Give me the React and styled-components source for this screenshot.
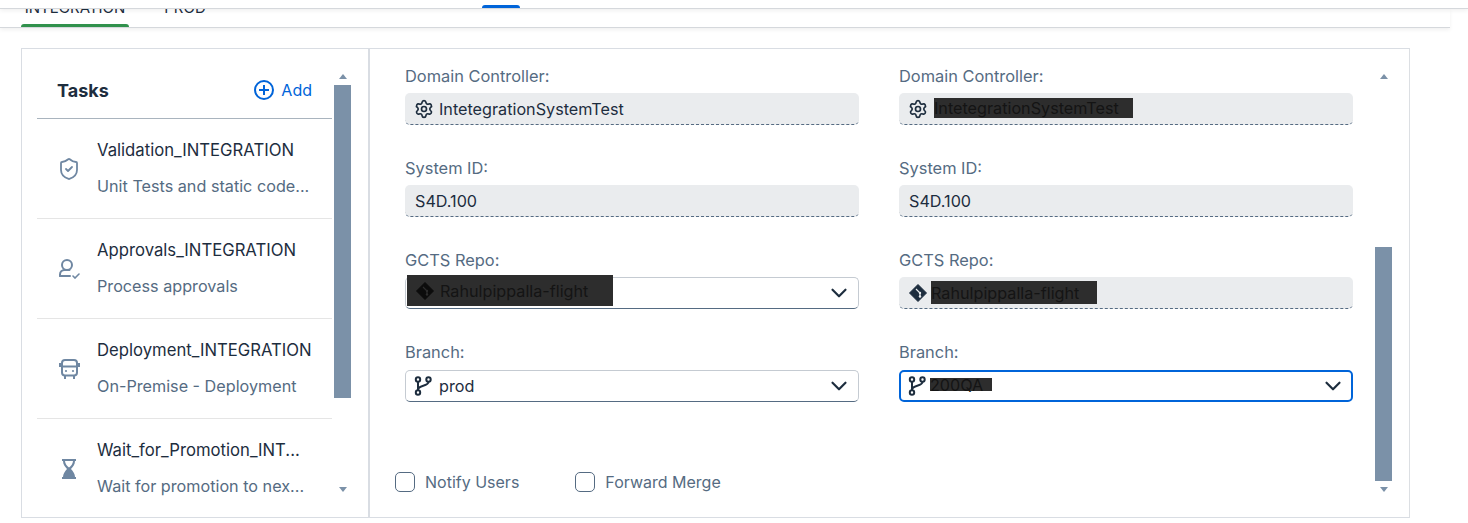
import React from "react";
import styled, { createGlobalStyle } from "styled-components";
import { ChevronDown, Settings, ShieldCheck } from "lucide-react";

const Global = createGlobalStyle`
  html, body { margin: 0; padding: 0; background: #fff; }
  body { font-family: Inter, "Noto Sans", sans-serif; color: #1d2d3e; }
  * { box-sizing: border-box; }
`;

const Page = styled.div`
  width: 1468px;
  height: 523px;
  overflow: hidden;
  background: #fff;
`;

const TopStrip = styled.div`
  position: relative;
  z-index: 1;
  height: 9px;
  background: #fff;
  border-bottom: 1px solid #d5d8dc;
  box-shadow: 0 2px 4px rgba(0, 0, 0, 0.06);
  padding-left: 482px;
  display: flex;
  align-items: flex-end;
`;

const ActiveMark = styled.div`
  width: 38px;
  height: 3px;
  background: #0064d9;
  border-radius: 3px 3px 0 0;
`;

const TabStrip = styled.div`
  width: 1450px;
  height: 19px;
  border-bottom: 1px solid #d5d8dc;
  box-shadow: 0 2px 4px rgba(0, 0, 0, 0.06);
  display: flex;
  padding-left: 21px;
  gap: 31px;
`;

const Tab = styled.div`
  width: ${(p) => p.$w}px;
  height: 18px;
  display: flex;
  flex-direction: column;
  justify-content: flex-end;
  align-items: center;
  position: relative;
  font-size: 15px;
  line-height: 20px;
  &::after {
    content: "";
    display: ${(p) => (p.$color ? "block" : "none")};
    position: absolute;
    left: 0;
    right: 0;
    bottom: 0;
    height: 3px;
    border-radius: 3px 3px 0 0;
    background: ${(p) => p.$color};
  }
`;

const TabLabel = styled.span`
  display: block;
  flex: none;
  margin-bottom: 9px;
  white-space: nowrap;
`;

const Panel = styled.div`
  width: 1389px;
  height: 470px;
  margin: 20px 0 0 21px;
  border: 1px solid #d9dde3;
  border-right-color: #dcdfe3;
  display: flex;
  overflow: hidden;
`;

const Sidebar = styled.aside`
  width: 348px;
  flex: none;
  border-right: 2px solid #d9dde3;
  display: flex;
  padding-left: 15px;
`;

const SideList = styled.div`
  width: 295px;
  flex: none;
  overflow: hidden;
`;

const SideHead = styled.div`
  height: 70px;
  border-bottom: 1px solid #a9b4be;
  display: flex;
  align-items: center;
  justify-content: space-between;
  padding: 13px 20px 0 20px;
`;

const SideTitle = styled.h2`
  margin: 0;
  font-size: 18px;
  font-weight: 700;
  color: #1d2d3e;
`;

const AddLink = styled.a`
  display: flex;
  align-items: center;
  gap: 7px;
  color: #0064d9;
  font-size: 16px;
`;

const Task = styled.div`
  height: 100px;
  flex: none;
  border-bottom: 1px solid #e5e5e5;
  display: grid;
  grid-template-columns: 60px 1fr;
  align-items: center;
`;

const TaskIcon = styled.div`
  display: flex;
  justify-content: center;
  padding-left: 4px;
  color: #6f87a2;
`;

const TaskText = styled.div`
  min-width: 0;
  display: flex;
  flex-direction: column;
  gap: 12px;
  margin-top: -2px;
`;

const TaskTitle = styled.div`
  font-size: 16.7px;
  line-height: 24px;
  white-space: nowrap;
`;

const TaskSub = styled.div`
  font-size: 16.2px;
  line-height: 24px;
  white-space: nowrap;
  color: #556b82;
`;

const Track = styled.div`
  width: 17px;
  flex: none;
  margin-left: ${(p) => p.$ml}px;
  display: flex;
  flex-direction: column;
  align-items: center;
  padding-top: 25px;
  height: 468px;
`;

const Arrow = styled.div`
  width: 0;
  height: 0;
  border-left: 4.5px solid transparent;
  border-right: 4.5px solid transparent;
  ${(p) => (p.$down ? "border-top: 5px solid #7b91a8;" : "border-bottom: 5px solid #7b91a8;")}
`;

const Thumb = styled.div`
  width: 17px;
  flex: none;
  background: #7b91a8;
  margin-top: ${(p) => p.$top}px;
  height: ${(p) => p.$h}px;
`;

const BottomArrow = styled(Arrow)`
  margin-top: ${(p) => p.$gap}px;
`;

const Main = styled.main`
  flex: 1;
  display: flex;
  min-width: 0;
`;

const Form = styled.div`
  width: 1005px;
  flex: none;
  padding: 15px 0 0 25px;
`;

const Columns = styled.div`
  display: grid;
  grid-template-columns: 454px 454px;
  column-gap: 40px;
  padding-left: 10px;
`;

const Group = styled.div`
  height: 92px;
`;

const Label = styled.div`
  font-size: 16.4px;
  line-height: 24px;
  color: #556b82;
  margin-bottom: ${(p) => p.$mb ?? 5}px;
`;

const Field = styled.div`
  height: 32px;
  border-radius: 5px;
  padding: 0 10px;
  display: flex;
  align-items: center;
  gap: 6px;
  font-size: 16.2px;
  color: #1d2d3e;
`;

const ReadField = styled(Field)`
  background: #eaecee;
  border-bottom: 1px dashed #556b82;
`;

const SelectField = styled(Field)`
  background: #fff;
  border: 1px solid #c5cbd2;
  border-bottom-color: #556b82;
`;

const FocusField = styled(Field)`
  background: #fff;
  border: 2px solid #0064d9;
  padding: 0 9px;
`;

const Caret = styled(ChevronDown)`
  margin-left: auto;
  margin-right: -4px;
  color: #1d2d3e;
`;

const Redact = styled.span`
  background: #2d2d2d;
  color: #141414;
  display: inline-flex;
  align-items: center;
  gap: 6px;
  height: ${(p) => p.$h}px;
  width: ${(p) => p.$w}px;
  margin-left: ${(p) => p.$ml || 0}px;
  margin-top: ${(p) => p.$mt || 0}px;
  padding-left: ${(p) => p.$pl || 0}px;
  flex: none;
  white-space: nowrap;
`;

const Checks = styled.div`
  display: flex;
  gap: 56px;
  margin-top: 40px;
`;

const Check = styled.label`
  display: flex;
  align-items: center;
  gap: 10px;
  font-size: 16px;
  color: #556b82;
`;

const Box = styled.span`
  width: 20px;
  height: 20px;
  border: 1px solid #556b82;
  border-radius: 5px;
  background: #fff;
`;

const Plus = () => (
  <svg width="20" height="20" viewBox="0 0 20 20" fill="none" stroke="#0064d9" strokeWidth="2">
    <circle cx="10" cy="10" r="9" />
    <path d="M10 5v10M5 10h10" />
  </svg>
);

const UserTick = () => (
  <svg width="22" height="20" viewBox="0 0 22 20" fill="none" stroke="#6f87a2" strokeWidth="2" strokeLinecap="round">
    <circle cx="9" cy="6" r="5" />
    <path d="M2 17v-1.500c0-2.500 2-4.500 4.500-4.500h5" />
    <path d="M2 17h10" />
    <path d="M15 17l2 2 4-4" strokeWidth="1.600" />
  </svg>
);

const Bus = () => (
  <svg width="21" height="20" viewBox="0 0 21 20" fill="none" stroke="#6f87a2" strokeWidth="2">
    <rect x="3" y="1" width="15" height="15.500" rx="3" />
    <path d="M3 7.500h15M1 4v4M20 4v4" />
    <path d="M6 16.500V20M15 16.500V20" />
    <circle cx="7" cy="12" r="1.100" fill="#6f87a2" stroke="none" />
    <circle cx="14" cy="12" r="1.100" fill="#6f87a2" stroke="none" />
  </svg>
);

const Hourglass = () => (
  <svg width="14" height="20" viewBox="0 0 14 20" fill="#6f87a2">
    <path d="M0 0h14v2h-1c0 3.500-2 5.500-4 8 2 2.500 4 4.500 4 8h1v2H0v-2h1c0-3.500 2-5.500 4-8-2-2.500-4-4.500-4-8H0z M3 2c0 2.500 2 5 4 6.500C9 7 11 4.500 11 2z" fillRule="evenodd" />
  </svg>
);

const GitDiamond = ({ fill = "#1d2d3e", inner = "#eaecee" }) => (
  <svg width="18" height="18" viewBox="0 0 18 18" style={{ flex: "none" }}>
    <path d="M9 0.500 17.500 9 9 17.500 0.500 9z" fill={fill} stroke={fill} strokeLinejoin="round" />
    <path d="M7 5l4 4v3.500" stroke={inner} strokeWidth="1.200" fill="none" />
    <circle cx="11" cy="9" r="1.200" fill={inner} />
    <circle cx="11" cy="12.500" r="1.200" fill={inner} />
  </svg>
);

const Gear = () => <Settings size={20} strokeWidth={2} color="#1d2d3e" style={{ flex: "none", margin: "0 -1px" }} />;

const Branch = () => (
  <svg width="18" height="20" viewBox="0 0 18 20" fill="none" stroke="#1d2d3e" strokeWidth="2" style={{ flex: "none", margin: "0 1px 0 -2px" }}>
    <circle cx="4" cy="3.500" r="2.200" />
    <circle cx="4" cy="16.500" r="2.200" />
    <circle cx="14.500" cy="3.500" r="2.200" />
    <path d="M4 5.700v8.600" />
    <path d="M14.500 5.700c0 5-10.500 3-10.500 8" />
  </svg>
);

const tasks = [
  { title: "Validation_INTEGRATION", sub: "Unit Tests and static code...", icon: <ShieldCheck size={24} strokeWidth={1.8} /> },
  { title: "Approvals_INTEGRATION", sub: "Process approvals", icon: <UserTick /> },
  { title: "Deployment_INTEGRATION", sub: "On-Premise - Deployment", icon: <Bus /> },
  { title: "Wait_for_Promotion_INT...", sub: "Wait for promotion to nex...", icon: <Hourglass /> },
];

export default function App() {
  return (
    <Page>
      <Global />
      <TopStrip>
        <ActiveMark />
      </TopStrip>
      <TabStrip>
        <Tab $w={108} $color="#30914c">
          <TabLabel>INTEGRATION</TabLabel>
        </Tab>
        <Tab $w={50}>
          <TabLabel>PROD</TabLabel>
        </Tab>
      </TabStrip>
      <Panel>
        <Sidebar>
          <SideList>
            <SideHead>
              <SideTitle>Tasks</SideTitle>
              <AddLink>
                <Plus />
                Add
              </AddLink>
            </SideHead>
            {tasks.map((t) => (
              <Task key={t.title}>
                <TaskIcon>{t.icon}</TaskIcon>
                <TaskText>
                  <TaskTitle>{t.title}</TaskTitle>
                  <TaskSub>{t.sub}</TaskSub>
                </TaskText>
              </Task>
            ))}
          </SideList>
          <Track $ml={2}>
            <Arrow />
            <Thumb $top={6} $h={313} />
            <BottomArrow $down $gap={89} />
          </Track>
        </Sidebar>
        <Main>
          <Form>
            <Columns>
              <Group>
                <Label>Domain Controller:</Label>
                <ReadField>
                  <Gear />
                  IntetegrationSystemTest
                </ReadField>
              </Group>
              <Group>
                <Label>Domain Controller:</Label>
                <ReadField>
                  <Gear />
                  <Redact $w={199} $h={20} $ml={1} $mt={-1}>IntetegrationSystemTest</Redact>
                </ReadField>
              </Group>
              <Group>
                <Label>System ID:</Label>
                <ReadField>S4D.100</ReadField>
              </Group>
              <Group>
                <Label>System ID:</Label>
                <ReadField>S4D.100</ReadField>
              </Group>
              <Group>
                <Label>GCTS Repo:</Label>
                <SelectField>
                  <Redact $w={206} $h={31} $ml={-9} $mt={-5} $pl={9}>
                    <GitDiamond fill="#0c0c0c" inner="#2d2d2d" />
                    Rahulpippalla-flight
                  </Redact>
                  <Caret size={26} strokeWidth={2} />
                </SelectField>
              </Group>
              <Group>
                <Label>GCTS Repo:</Label>
                <ReadField>
                  <GitDiamond />
                  <Redact $w={166} $h={23} $ml={-2}>Rahulpippalla-flight</Redact>
                </ReadField>
              </Group>
              <Group>
                <Label $mb={6}>Branch:</Label>
                <SelectField>
                  <Branch />
                  prod
                  <Caret size={26} strokeWidth={2} />
                </SelectField>
              </Group>
              <Group>
                <Label $mb={6}>Branch:</Label>
                <FocusField>
                  <Branch />
                  <Redact $w={62} $h={13} $ml={-3} $mt={-3}>200QA</Redact>
                  <Caret size={26} strokeWidth={2} />
                </FocusField>
              </Group>
            </Columns>
            <Checks>
              <Check>
                <Box />
                Notify Users
              </Check>
              <Check>
                <Box />
                Forward Merge
              </Check>
            </Checks>
          </Form>
          <Track $ml={0}>
            <Arrow />
            <Thumb $top={168} $h={234} />
            <BottomArrow $down $gap={6} />
          </Track>
        </Main>
      </Panel>
    </Page>
  );
}
